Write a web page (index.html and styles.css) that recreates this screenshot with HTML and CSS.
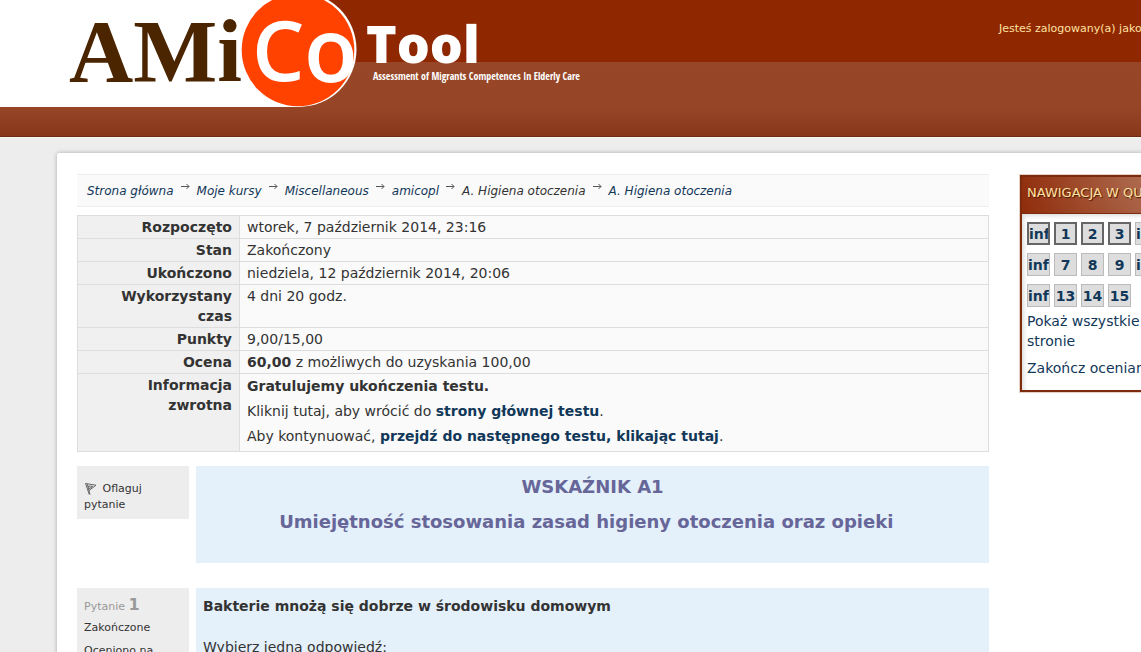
FILE: index.html
```
<!DOCTYPE html>
<html lang="pl">
<head>
<meta charset="utf-8">
<title>A. Higiena otoczenia</title>
<link rel="stylesheet" href="styles.css">
</head>
<body>
<svg class="defs" aria-hidden="true">
  <symbol id="arrow" viewBox="0 0 9 7"><path d="M0 3.5h8M5.5 1l2.5 2.5L5.5 6" fill="none" stroke="#555" stroke-width="1"/></symbol>
</svg>
<div class="page">
  <header class="header">
    <svg class="logo" viewBox="0 0 600 107" role="img" aria-label="AMiCo Tool">
      <rect width="299" height="107" fill="#fff"/>
      <circle cx="299" cy="49.5" r="57.5" fill="#fff"/>
      <circle cx="298" cy="50" r="56.3" fill="#ff4200"/>
      <text class="logo-ami" x="69" y="81">AMi</text>
      <text class="logo-c" x="252" y="81">C</text>
      <text class="logo-o" x="304" y="82">o</text>
      <text class="logo-tool" x="366" y="63">Tool</text>
      <text class="logo-sub" x="373" y="80">Assessment of Migrants Competences In Elderly Care</text>
    </svg>
    <p class="login">Jesteś zalogowany(a) jako</p>
  </header>

  <div class="card">
    <main class="main">
      <nav class="crumbs" aria-label="Ścieżka">
        <a href="#">Strona główna</a>
        <svg class="arrow"><use href="#arrow"/></svg>
        <a href="#">Moje kursy</a>
        <svg class="arrow"><use href="#arrow"/></svg>
        <a href="#">Miscellaneous</a>
        <svg class="arrow"><use href="#arrow"/></svg>
        <a href="#">amicopl</a>
        <svg class="arrow"><use href="#arrow"/></svg>
        <span>A. Higiena otoczenia</span>
        <svg class="arrow"><use href="#arrow"/></svg>
        <a href="#">A. Higiena otoczenia</a>
      </nav>

      <table class="summary">
        <tbody>
          <tr><th scope="row">Rozpoczęto</th><td>wtorek, 7 październik 2014, 23:16</td></tr>
          <tr><th scope="row">Stan</th><td>Zakończony</td></tr>
          <tr><th scope="row">Ukończono</th><td>niedziela, 12 październik 2014, 20:06</td></tr>
          <tr><th scope="row">Wykorzystany czas</th><td>4 dni 20 godz.</td></tr>
          <tr><th scope="row">Punkty</th><td>9,00/15,00</td></tr>
          <tr><th scope="row">Ocena</th><td><b>60,00</b> z możliwych do uzyskania 100,00</td></tr>
          <tr><th scope="row">Informacja zwrotna</th><td>
            <p><b>Gratulujemy ukończenia testu.</b></p>
            <p>Kliknij tutaj, aby wrócić do <a href="#">strony głównej testu</a>.</p>
            <p>Aby kontynuować, <a href="#">przejdź do następnego testu, klikając tutaj</a>.</p>
          </td></tr>
        </tbody>
      </table>

      <section class="question">
        <div class="info info-flag">
          <svg class="flag" viewBox="0 0 14 14"><path d="M1.5 1.5l3.8 11M3.2 2l2.8 10.5M1.5 1.5l10.5 1.7L5 8.5M4.5 4l4.2.4-3.4 2.4z" fill="none" stroke="#666" stroke-width="1"/></svg>
          Oflaguj pytanie
        </div>
        <div class="content content-title">
          <h2>WSKAŹNIK A1</h2>
          <h2>Umiejętność stosowania zasad higieny otoczenia oraz opieki&nbsp;&nbsp;</h2>
        </div>
      </section>

      <section class="question">
        <div class="info">
          <h3>Pytanie <b>1</b></h3>
          <p>Zakończone</p>
          <p>Oceniono na 1,00&nbsp;z&nbsp;1,00</p>
        </div>
        <div class="content">
          <p><b>Bakterie mnożą się dobrze w środowisku domowym</b></p>
          <p class="prompt">Wybierz jedną odpowiedź:</p>
        </div>
      </section>
    </main>

    <aside class="block">
      <h2>NAWIGACJA W QUIZIE</h2>
      <div class="block-body">
        <div class="buttons">
          <a class="now word" href="#">info</a><a class="now" href="#">1</a><a class="now" href="#">2</a><a class="now" href="#">3</a><a class="word" href="#">info</a><a href="#">4</a><a href="#">5</a><a href="#">6</a>
          <a class="word" href="#">info</a><a href="#">7</a><a href="#">8</a><a href="#">9</a><a class="word" href="#">info</a><a href="#">10</a><a href="#">11</a><a href="#">12</a>
          <a class="word" href="#">info</a><a href="#">13</a><a href="#">14</a><a href="#">15</a>
        </div>
        <a class="link" href="#">Pokaż wszystkie pytania na jednej stronie</a>
        <a class="link" href="#">Zakończ ocenianie</a>
      </div>
    </aside>
  </div>
</div>
</body>
</html>
```
FILE: styles.css
```
* { box-sizing: border-box; }
body {
  margin: 0;
  height: 100vh;
  overflow: hidden;
  background: #ededed;
  color: #333;
  font: 14px/20px Verdana, "DejaVu Sans", sans-serif;
}
h2, h3, p { margin: 0; }
a { color: #113759; text-decoration: none; }
.defs { position: absolute; width: 0; height: 0; }

/* The page is wider than the window; the right column runs off its edge. */
.page { width: calc(100% + 160px); }

.header {
  display: flex;
  justify-content: space-between;
  height: 138px;
  background: linear-gradient(#8f2800 0 62px, #974728 62px, #964527 108px, #87361a 136px, #6c2c16 136px, #6c2c16 137px, #fbf3ef 137px);
}
.logo { width: 600px; height: 107px; flex: none; }
.logo text { fill: #fff; }
.logo .logo-ami { font: bold 89px "Liberation Serif", serif; fill: #4a2500; }
.logo-c { font: 600 83px "Open Sans", sans-serif; }
.logo-o { font: 600 88px "Open Sans", sans-serif; }
.logo-tool { font: 800 52px "Open Sans", sans-serif; }
.logo-sub { font: 600 10px "Liberation Sans Narrow", "Open Sans Condensed", "DejaVu Sans Condensed", sans-serif; }
.login {
  width: 302px;
  padding-top: 19px;
  color: #ffe1a0;
  font-size: 11px;
}

.card {
  display: grid;
  grid-template-columns: minmax(0, 1fr) 261px;
  gap: 31px;
  align-items: start;
  min-height: 560px;
  margin: 15px 0 0 57px;
  padding: 21px 20px;
  background: #fff;
  border-radius: 2px 0 0 0;
  box-shadow: 0 0 4px #aaa;
}

.crumbs {
  display: flex;
  align-items: center;
  gap: 7px;
  height: 33px;
  margin-bottom: 8px;
  padding: 0 10px;
  background: #fafafa;
  border: solid #eee;
  border-width: 1px 0;
  font-size: 12px;
  font-style: italic;
  white-space: nowrap;
}
.arrow { width: 9px; height: 7px; margin-bottom: 8px; }

.summary {
  width: 100%;
  margin-bottom: 14px;
  border-collapse: collapse;
}
.summary th, .summary td {
  padding: 1px 7px;
  border: 1px solid #ddd;
  vertical-align: top;
}
.summary th { width: 162px; background: #f0f0f0; text-align: right; }
.summary td { background: #fafafa; }
.summary p { padding: 1px 0 4px; }
.summary td a { font-weight: bold; }

.question {
  display: grid;
  grid-template-columns: 112px minmax(0, 1fr);
  gap: 7px;
  align-items: start;
  margin-bottom: 25px;
}
.info {
  padding: 7px;
  background: #ededed;
  font-size: 11px;
  line-height: 16px;
}
.info-flag { padding: 15px 7px 6px; }
.flag { width: 14px; height: 14px; margin-right: 1px; vertical-align: middle; }
.info h3 { color: #999; font-size: 11px; font-weight: normal; line-height: 20px; }
.info h3 b { font-size: 16px; }
.info p { margin: 3px 0 7px; }
.content { padding: 8px 7px; background: #e4f0fa; }
.content-title { min-height: 97px; text-align: center; }
.content h2 { margin-bottom: 10px; color: #669; font-size: 18px; line-height: 25px; }
.prompt { margin-top: 21px; }

.block {
  background: #fff;
  border: 2px solid #7d2b0d;
  outline: 1px solid #e6d0c6;
  margin-top: 1px;
}
.block h2 {
  height: 37px;
  padding-left: 5px;
  background: radial-gradient(circle at 160px -20px, #b98168, #8f2c0a 170px);
  border-bottom: 1px solid #7d2b0d;
  color: #ffe1a0;
  font-size: 13px;
  font-weight: normal;
  line-height: 32px;
  text-shadow: 1px 1px 1px #4a1500;
}
.block-body { padding: 8px 5px; box-shadow: inset 2px 2px 4px #ddd; }
.buttons {
  display: grid;
  grid-template-columns: repeat(8, 23px);
  gap: 8px 4px;
  margin-bottom: 4px;
}
.buttons a {
  height: 23px;
  overflow: hidden;
  background: #ddd;
  border: 1px solid #bbb;
  font-weight: bold;
  line-height: 22px;
  text-align: center;
}
.buttons .now { border: 2px solid #666; line-height: 20px; }
.buttons .word { text-align: left; }
.link { display: block; margin-bottom: 7px; }
.link:last-child { margin-bottom: 4px; }
```
